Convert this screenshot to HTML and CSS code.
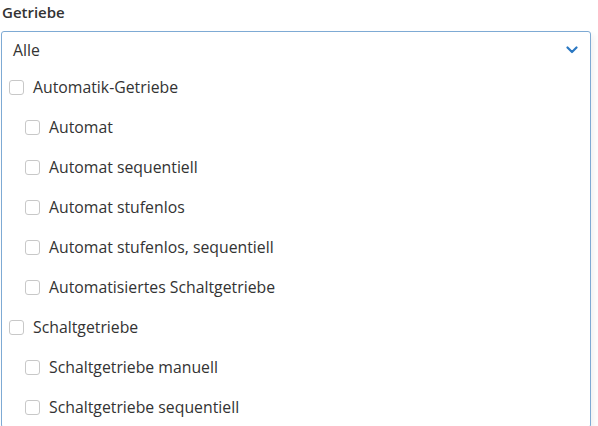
FILE: index.html
```html
<!DOCTYPE html>
<html lang="de">
<head>
<meta charset="utf-8">
<link rel="stylesheet" href="styles.css">
</head>
<body>
<div class="field">
  <div class="label">Getriebe</div>
  <div class="select">
    <div class="head">
      <span>Alle</span>
      <svg class="chev" width="12" height="8" viewBox="0 0 12 8"><path d="M1.5 1.5 L6 6 L10.5 1.5" fill="none" stroke="#2b78c2" stroke-width="2.2" stroke-linecap="round" stroke-linejoin="round"/></svg>
    </div>
    <ul class="list">
      <li class="opt"><span class="cb"></span>Automatik-Getriebe</li>
      <li class="opt sub"><span class="cb"></span>Automat</li>
      <li class="opt sub"><span class="cb"></span>Automat sequentiell</li>
      <li class="opt sub"><span class="cb"></span>Automat stufenlos</li>
      <li class="opt sub"><span class="cb"></span>Automat stufenlos, sequentiell</li>
      <li class="opt sub"><span class="cb"></span>Automatisiertes Schaltgetriebe</li>
      <li class="opt"><span class="cb"></span>Schaltgetriebe</li>
      <li class="opt sub"><span class="cb"></span>Schaltgetriebe manuell</li>
      <li class="opt sub"><span class="cb"></span>Schaltgetriebe sequentiell</li>
    </ul>
  </div>
</div>
</body>
</html>
```
FILE: styles.css
```css
html, body {
  margin: 0;
  padding: 0;
  background: #fff;
  overflow: hidden;
}
body {
  font-family: "Open Sans", "Noto Sans", sans-serif;
  font-size: 15.8px;
  color: #333;
}
.field {
  padding: 2px 7px 0 1px;
}
.label {
  font-size: 15px;
  font-weight: 600;
  padding-left: 1px;
  line-height: 20px;
  margin-bottom: 9px;
}
.select {
  border: 1px solid #7eaad4;
  border-radius: 3px;
  background: #fff;
  box-shadow: 3px 4px 6px rgba(0,0,0,0.06);
}
.head {
  display: flex;
  align-items: center;
  justify-content: space-between;
  height: 35px;
  padding: 0 12px 0 11px;
}
.chev {
  display: block;
  margin-top: 1px;
}
.list {
  list-style: none;
  margin: 0;
  padding: 0;
}
.opt {
  display: flex;
  align-items: center;
  height: 40px;
  padding-left: 7px;
}
.opt.sub {
  padding-left: 23px;
}
.cb {
  width: 13px;
  height: 13px;
  border: 1px solid #c8c8c8;
  border-radius: 3px;
  margin-right: 9px;
  flex: none;
}
```
